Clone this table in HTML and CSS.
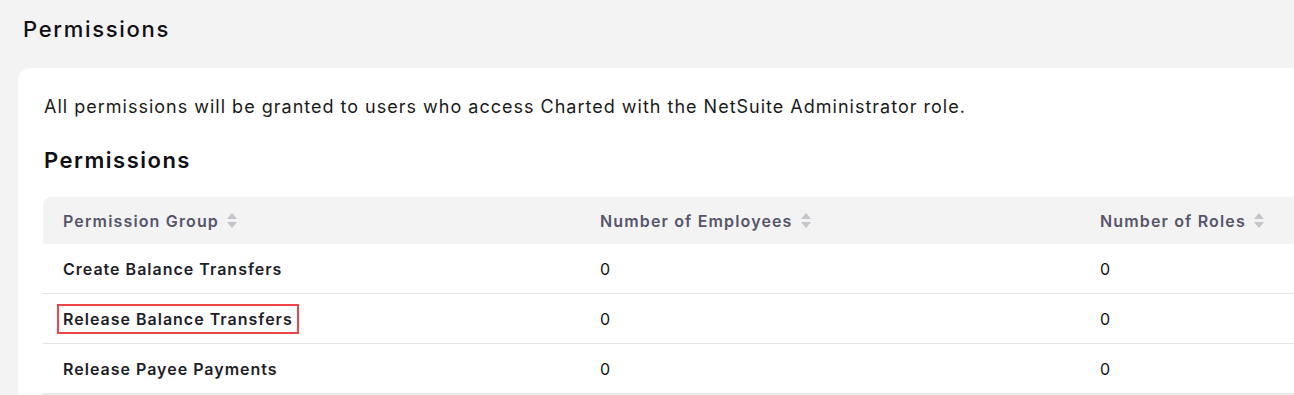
FILE: index.html
```html
<!DOCTYPE html>
<html lang="en">
<head>
<meta charset="utf-8">
<title>Permissions</title>
<link rel="stylesheet" href="styles.css">
</head>
<body>
<div class="page">
  <h1 class="page-title">Permissions</h1>
  <section class="card">
    <p class="intro">All permissions will be granted to users who access Charted with the NetSuite Administrator role.</p>
    <h2 class="section-title">Permissions</h2>
    <div class="table">
      <div class="row head">
        <div class="cell">Permission Group <span class="sort"><svg width="10" height="15" viewBox="0 0 10 15"><path d="M5 0 L10 6 H0 Z" fill="#c4c4cc"/><path d="M0 9 H10 L5 15 Z" fill="#c4c4cc"/></svg></span></div>
        <div class="cell">Number of Employees <span class="sort"><svg width="10" height="15" viewBox="0 0 10 15"><path d="M5 0 L10 6 H0 Z" fill="#c4c4cc"/><path d="M0 9 H10 L5 15 Z" fill="#c4c4cc"/></svg></span></div>
        <div class="cell">Number of Roles <span class="sort"><svg width="10" height="15" viewBox="0 0 10 15"><path d="M5 0 L10 6 H0 Z" fill="#c4c4cc"/><path d="M0 9 H10 L5 15 Z" fill="#c4c4cc"/></svg></span></div>
      </div>
      <div class="row">
        <div class="cell name">Create Balance Transfers</div>
        <div class="cell num">0</div>
        <div class="cell num">0</div>
      </div>
      <div class="row">
        <div class="cell name"><span class="highlight">Release Balance Transfers</span></div>
        <div class="cell num">0</div>
        <div class="cell num">0</div>
      </div>
      <div class="row">
        <div class="cell name">Release Payee Payments</div>
        <div class="cell num">0</div>
        <div class="cell num">0</div>
      </div>
    </div>
  </section>
</div>
</body>
</html>
```
FILE: styles.css
```css
html, body {
  margin: 0;
  padding: 0;
  background: #f3f3f3;
  overflow: hidden;
}

body {
  font-family: Inter, "Noto Sans", sans-serif;
  color: #111;
}

.page {
  width: 1340px;
}

.page-title {
  margin: 0;
  padding: 14px 0 0 23px;
  height: 68px;
  box-sizing: border-box;
  font-size: 22px;
  line-height: 30px;
  font-weight: 500;
  letter-spacing: 1.7px;
  color: #0f0f14;
}

.card {
  margin-left: 18px;
  background: #fff;
  border-radius: 12px 0 0 0;
  padding: 25px 0 0 25px;
}

.intro {
  margin: 0 0 0 1px;
  font-size: 18px;
  line-height: 28px;
  letter-spacing: 1px;
  color: #1a1a1a;
}

.section-title {
  margin: 24px 0 0 1px;
  font-size: 22px;
  line-height: 30px;
  font-weight: 600;
  letter-spacing: 1.5px;
  color: #0f0f14;
}

.table {
  margin-top: 22px;
}

.row {
  display: grid;
  grid-template-columns: 537px 500px 1fr;
  height: 50px;
  align-items: center;
  border-bottom: 1px solid #e4e4e6;
  box-sizing: border-box;
}

.row.head {
  height: 47px;
  background: #f3f3f4;
  border-radius: 8px 0 0 0;
  border-bottom: none;
}

.cell {
  padding-left: 20px;
  font-size: 16px;
  line-height: 22px;
  letter-spacing: 1px;
}

.head .cell {
  font-weight: 600;
  color: #56556a;
  letter-spacing: 1.15px;
  display: flex;
  align-items: center;
  gap: 8px;
}

.sort {
  display: inline-flex;
}

.name {
  font-weight: 600;
  color: #1e1e28;
}

.num {
  font-weight: 400;
  color: #111;
}

.highlight {
  display: inline-block;
  border: 2px solid #ef4449;
  padding: 2px 4px;
  margin-left: -6px;
}
```
